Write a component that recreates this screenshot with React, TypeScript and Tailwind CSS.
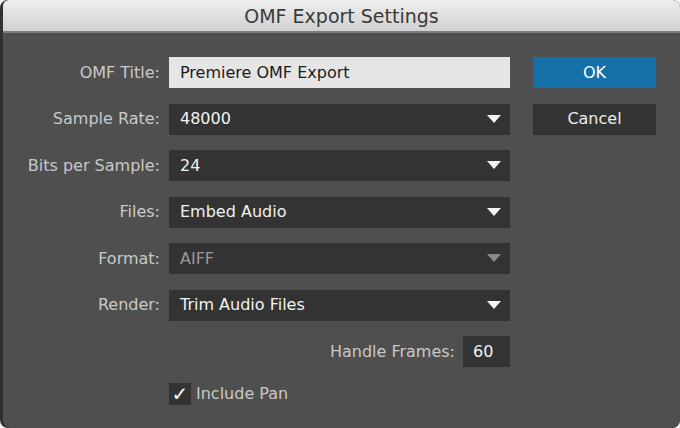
import React from "react";

const font = { fontFamily: '"DejaVu Sans", "Liberation Sans", sans-serif' };

function Arrow({ dim }: { dim?: boolean }) {
  return (
    <svg width="14" height="9" viewBox="0 0 14 9" className="shrink-0">
      <polygon points="0,0 14,0 7,8" fill={dim ? "#8a8a8a" : "#f4f4f4"} />
    </svg>
  );
}

function Select({ value, dim }: { value: string; dim?: boolean }) {
  return (
    <div className="h-[31px] bg-[#333333] flex items-center justify-between pl-[11px] pr-[9px]">
      <span className={dim ? "text-[#9a9a9a]" : "text-[#f2f2f2]"}>{value}</span>
      <Arrow dim={dim} />
    </div>
  );
}

function Label({ children }: { children: React.ReactNode }) {
  return <div className="h-[31px] flex items-center justify-end text-[#c9c9c9]">{children}</div>;
}

export default function App() {
  return (
    <div className="w-[680px] h-[428px] bg-[#f2f2f2] text-[16px]" style={font}>
      <div className="w-full h-full rounded-[8px] overflow-hidden bg-[#303030] pl-[3px] flex flex-col">
        <div className="h-[33px] shrink-0 bg-gradient-to-b from-[#efefef] to-[#d0d0d0] border-b-2 border-[#7c7c7c] rounded-tl-[6px] flex items-center justify-center">
          <span className="text-[19px] text-[#3a3a3a] leading-none pt-[1px]">OMF Export Settings</span>
        </div>
        <div className="flex-1 bg-[#4f4f4f] rounded-bl-[8px] flex pt-[24px]">
          <div className="grid grid-cols-[157px_341px] gap-x-[9px] gap-y-[15.5px] auto-rows-[31px]">
            <Label>OMF Title:</Label>
            <div className="h-[31px] bg-[#e5e5e5] flex items-center pl-[11px] text-[#1c1c1c]">Premiere OMF Export</div>
            <Label>Sample Rate:</Label>
            <Select value="48000" />
            <Label>Bits per Sample:</Label>
            <Select value="24" />
            <Label>Files:</Label>
            <Select value="Embed Audio" />
            <Label>Format:</Label>
            <Select value="AIFF" dim />
            <Label>Render:</Label>
            <Select value="Trim Audio Files" />
            <div />
            <div className="h-[31px] flex items-center justify-end gap-[8px]">
              <span className="text-[#c9c9c9]">Handle Frames:</span>
              <div className="w-[47px] h-[31px] bg-[#333333] flex items-center pl-[10px] text-[#f2f2f2]">60</div>
            </div>
            <div />
            <div className="h-[31px] flex items-center gap-[5px] -mt-[4px]">
              <div className="w-[22px] h-[22px] bg-[#333333] flex items-center justify-center text-[#f6f6f6] text-[20px] font-bold leading-none">✓</div>
              <span className="text-[#c9c9c9]">Include Pan</span>
            </div>
          </div>
          <div className="ml-[23px] w-[123px] flex flex-col gap-[15.5px]">
            <div className="h-[31px] bg-[#1570a7] flex items-center justify-center text-white">OK</div>
            <div className="h-[31px] bg-[#333333] flex items-center justify-center text-[#ececec]">Cancel</div>
          </div>
        </div>
      </div>
    </div>
  );
}
